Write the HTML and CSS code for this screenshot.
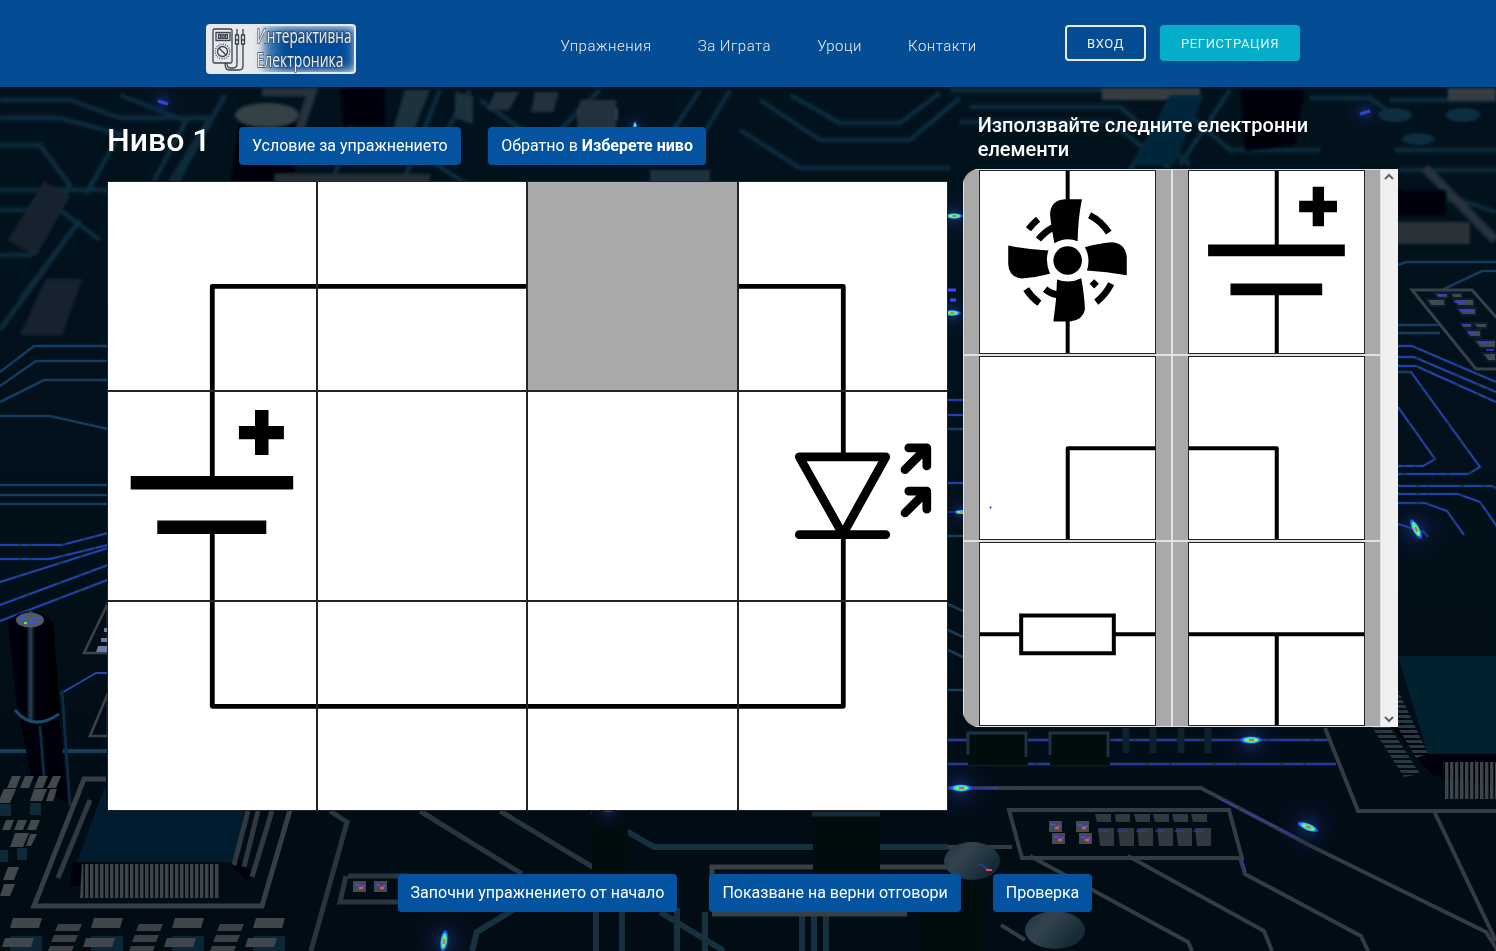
FILE: index.html
```html
<!DOCTYPE html>
<html lang="bg">
<head>
<meta charset="utf-8">
<title>Интерактивна Електроника</title>
<link rel="stylesheet" href="styles.css">
</head>
<body>
<svg class="backdrop" viewBox="0 0 1496 951" preserveAspectRatio="none" aria-hidden="true">
  <defs>
    <linearGradient id="base" x1="0" y1="0" x2="0" y2="1"><stop offset="0" stop-color="#02131e"/><stop offset=".5" stop-color="#01101a"/><stop offset="1" stop-color="#010c14"/></linearGradient>
    <linearGradient id="metal" x1="0" y1="0" x2="1" y2=".6"><stop offset="0" stop-color="#1c3340"/><stop offset=".4" stop-color="#33434d"/><stop offset="1" stop-color="#122733"/></linearGradient>
    <linearGradient id="can"><stop offset="0" stop-color="#000509"/><stop offset=".36" stop-color="#000509"/><stop offset=".43" stop-color="#27435c"/><stop offset=".52" stop-color="#000408"/><stop offset="1" stop-color="#000205"/></linearGradient>
    <radialGradient id="halo"><stop offset="0" stop-color="#1c4c9c" stop-opacity=".5"/><stop offset=".5" stop-color="#151d58" stop-opacity=".2"/><stop offset="1" stop-color="#101850" stop-opacity="0"/></radialGradient>
    <pattern id="pins" width="5" height="34" patternUnits="userSpaceOnUse"><rect width="3.4" height="34" fill="#3d4449"/></pattern>
    <pattern id="pinsH" width="34" height="5" patternUnits="userSpaceOnUse"><rect width="34" height="3" fill="#2a3942"/></pattern>
    <filter id="soft"><feGaussianBlur stdDeviation="1.6"/></filter>
    <filter id="fine"><feGaussianBlur stdDeviation=".6"/></filter>
    <g id="spark"><circle r="34" fill="url(#halo)"/><ellipse rx="11" ry="3.4" fill="#2b50ff"/><ellipse rx="8" ry="3" fill="#2ce8c8"/><path d="M-5-1h4v2h-4zM2-1h4v2H2z" fill="#7cff3c"/><path d="M-2-1h5v2h-5z" fill="#ff5148"/></g>
    <g id="smd"><path d="M0 18h32v30H0z" fill="#0c2836"/><path d="M3 0h29l-3 10H0z" fill="#41474c"/><path d="M-5 20h29l-3 9h-29z" fill="#41474c"/></g>
    <g id="steps"><path d="M4 0h24l-3 7H1zM0 11h24l-3 7h-24zM-4 22h24l-3 7h-24z" fill="#3a4146"/></g>
    <g id="ledblock"><rect width="13" height="11" fill="#454c52"/><path d="M2 4h4M8 5h4" stroke="#3d48ff" stroke-width="2"/><path d="M6 7h4" stroke="#f0504b" stroke-width="2.5"/></g>
  </defs>
  <rect width="1496" height="951" fill="url(#base)"/>
  <g filter="url(#soft)" fill="none" stroke="#07293b" stroke-width="5">
    <path d="M0 100h70l50 18h90l-40 64M0 118h60l60 16-34 60M120 95l66 26-32 60M225 95l-50 90M330 190l30-90M440 90l-36 90M470 90l-40 70 60 40M480 100l70 50 60 10M600 90l-60 60M700 90l-40 60M730 90l-36 60M760 100l60 40h90l50-42M740 130l60 38h150M790 95l50 28h60l40-30M950 90h210l70 60h90M970 107h150l70 58M960 122h150l60 46M1180 90l-50 80M1230 90l-50 75M1310 98h60l30 22M1390 100h106M1395 150h101M1400 170h96M0 190h108M0 210h60l40 30M1400 200h60l36 12"/>
    <path d="M0 145h40l30 40-40 70H0M20 300l60-80M0 330l80-110" stroke="#0a2a3a"/>
    <path d="M262 92h50l-20 60M1425 168l70 72" stroke="#26333c" stroke-width="9"/>
    <path d="M1448 94h48M1102 94h98M578 114h40" stroke="#353c42" stroke-width="12"/>
  </g>
  <g filter="url(#soft)">
    <path d="M1170 95l34 0-30 70h-40z" fill="#05263a"/>
    <path d="M1240 90h65l-10 55-50 6zM240 118h55v65h-65zM340 88h45v38h-42z" fill="#00060a"/>
    <ellipse cx="267" cy="115" rx="32" ry="12" fill="#363f46"/>
    <path d="M275 174h155v10H275z" fill="#202d36"/>
    <path d="M495 92l24 0-10 18h-22zM535 92h24l-6 20h-22zM580 100h36v36h-40z" fill="#20323e"/>
    <path d="M455 92l18 4v28l-18-6zM650 170h60v14h-60zM405 90h25l-20 50h-20z" fill="#1e303c"/>
    <path d="M8 240l36-58 26 14-34 60zM20 335h42l20-56H46z" fill="#15242d"/>
    <path d="M1396 222h74v22h-74z" fill="#293239"/><path d="M1396 190h50v26h-50z" fill="#000609"/>
    <ellipse cx="1395" cy="115" rx="17" ry="7" fill="#0c2d40"/><ellipse cx="1463" cy="115" rx="17" ry="7" fill="#0c2d40"/><ellipse cx="1418" cy="139" rx="16" ry="6" fill="#0c2d40"/>
  </g>
  <g fill="none" filter="url(#fine)">
    <g stroke="#123a5b" stroke-width="2.6">
      <path d="M0 372l34-26h74M0 386l36-25h72M0 402l44-22h64M0 416h50l58 13M0 485h108M0 495h108M0 504h108M0 545h62l46-12M0 559h50l58-14M0 582l108-34M0 605l108-40M0 621l110-42"/>
      <path d="M948 400h15M948 415h15M948 429h15M948 483h15M948 536h15M948 604l15 7M948 630l15 7M948 650l15 7M948 690h15"/>
      <path d="M1398 265l8-3h90M1444 289l38-18h14M1398 325h42M1398 333h42M1398 346h14l84 36M1398 357h16l82 35M1398 366h18l80 36M1398 372h13l69 95-12 7h-70M1398 407l37 52-12 7h-25M1398 486h94l4 2M1398 494h60l22 8 32 46M1398 503h27l22 8 17 24M1398 524l26 8 4 5"/>
    </g>
    <g stroke="#303eff" stroke-width="1" stroke-dasharray="18 3 8 2 30 5">
      <path d="M0 545h62l46-12M0 559h50l58-14M0 582l108-34M0 605l108-40M0 621l110-42M948 400h15M948 415h15M948 483h15M948 512h15M1398 346h14l84 36M1398 357h16l82 35M1398 366h18l80 36M1411 372l69 95-12 7h-70M1398 407l37 52-12 7h-25M1398 486h94M1398 494h60l22 8 32 46M1398 503h27l22 8 17 24M1398 524l26 8 4 5"/>
    </g>
    <path d="M1412 290h60l70 79h-66z" stroke="#344049" stroke-width="3"/>
    <g fill="#41484e" stroke="#071d29" stroke-width="2"><path d="M1434 293h14v5h-10zM1450 293h12v5h-9zM1426 299h19v7h-14zM1452 299h22v7h-16zM1456 308h20v7h-14zM1460 323h12v5h-9zM1473 323h14v5h-10zM1465 330h16v7h-11zM1474 340h22v8h-16zM1482 353h14v8h-8z"/></g>
    <g stroke="#303aff" stroke-width="1.5"><path d="M1437 295h8M1454 302h12M1460 311h14M1462 325h8M1468 333h8M1480 343h10M1486 350h8"/></g>
  </g>
  <g filter="url(#fine)">
    <path d="M108 603l-24 50h24zM108 693l-18 43h18z" fill="none" stroke="#3a4048" stroke-width="2.6"/>
    <path d="M104 628h6v4h-6zM101 638h8v4h-8zM98 646h10v6H96z" fill="#6c79a8"/>
    <path d="M60 694l36-21h12" fill="none" stroke="#2346a5" stroke-width="2"/>
    <path d="M0 751h108" stroke="#183c54" stroke-width="4"/>
    <path d="M20 720l12 60 36 24-10-100z" fill="#00060b"/>
    <path d="M40 726l4 50M62 690l8 116" stroke="#082b40" stroke-width="3"/>
    <path d="M8 622q22-22 45 0l7 90q-20 18-42 4z" fill="url(#can)"/>
    <ellipse cx="30" cy="620" rx="14" ry="7.5" fill="#505b65"/><path d="M20 619h6m3 3h7m-2-4h5" stroke="#424eff" stroke-width="2"/><path d="M24 623h3" stroke="#40e990" stroke-width="2"/>
    <path d="M15 710q18 22 44 4" fill="none" stroke="#1d4867" stroke-width="3"/>
    <path d="M106 779H84L34 906h228l28-96" fill="none" stroke="#363e44" stroke-width="5"/>
    <path d="M105 786l-28 76h156l12-52H108z" fill="#011d2d"/>
    <path d="M77 862l-2 24M233 862l18 16" stroke="#000408" stroke-width="9"/>
    <path d="M82 864h138v34H80z" fill="url(#pins)"/>
    <path d="M90 800l-32 78M248 811l-14 54M258 811l-14 56M272 811l-20 66" stroke="#30393f" stroke-width="5"/>
    <path d="M330 811l17 11-36 129M348 876h60M346 876l-6 26h70M420 811l102 63M500 811l104 63" fill="none" stroke="#263641" stroke-width="5"/>
    <use href="#ledblock" x="353" y="881"/><use href="#ledblock" x="374" y="881"/>
    <path d="M592 811l62 36h294M513 910l-36 22-5 19M660 912l64 39M596 912v39M622 912v39M677 908v43M705 912v39M802 912v39M814 912v39M826 912v39" fill="none" stroke="#18303f" stroke-width="6"/>
    <path d="M712 905v-38h236M712 914h195" fill="none" stroke="#383f45" stroke-width="5"/>
    <path d="M813 811h67v100h-67zM592 811h36v63h-36z" fill="#000910"/><path d="M812 814h68" stroke="#122c38" stroke-width="5"/>
    <use href="#smd" x="10" y="918"/><use href="#smd" x="91" y="918"/><use href="#smd" x="172" y="918"/><use href="#smd" x="253" y="918"/>
    <use href="#steps" x="54" y="924"/><use href="#steps" x="135" y="924"/><use href="#steps" x="216" y="924"/>
    <g fill="#42484d"><path d="M12 776h9l-5 12H7zM25 776h9l-5 12h-9zM39 776h9l-5 12h-9zM53 776h8l-5 12h-9zM4 789h12l-6 14H0v-5zM34 789h13l-5 12H30zM50 789h7l-4 12h-7zM6 820h8l-4 10H2zM18 820h9l-4 10h-9zM31 820h9l-4 10h-9zM15 833h14l-6 14H10zM30 834h7l-6 12h-5zM8 867h11l-5 13H3zM4 884h11l-5 12H0z"/></g>
    <path d="M0 804h11v12H0zM30 803h11v12H30zM0 850h8v12H0zM17 848h10v12H17z" fill="#0d2b3a"/>
    <g fill="none" stroke="#343b42" stroke-width="4">
      <path d="M948 788h253l110 58 175 86 12 19M1009 810h220l13 48h-220zM1240 858l5 16 116 62 7 15M1030 856l158 86 4 9M1128 856l136 75 8 20M1001 925l24 15M948 847h64M1434 811l62 130M1325 728l33 83h138"/>
    </g>
    <path d="M948 740h380M948 764h388" stroke="#1b354d" stroke-width="3"/><path d="M948 740h20m60 0h20m65 0h214M948 764h388M948 788h50M1220 799l40 20 40 20M1242 860l4 12" fill="none" stroke="#333eff" stroke-width="1" stroke-dasharray="20 3 40 4"/>
    <path d="M968 735h60v30h-60zM1050 735h60v30h-60z" fill="#00070e"/><path d="M968 755v-22h58v24M1050 755v-22h58v24" fill="none" stroke="#20323e" stroke-width="3"/>
    <path d="M1126 728v25M1153 728v25M1181 728v25M1208 728v25" stroke="#08202d" stroke-width="7"/>
    <path d="M1398 656h98v98h-68z" fill="#01212f"/><path d="M1392 727l40 48 64 12v-33h-68l-30-40z" fill="#000307"/>
    <path d="M1443 762h53v37h-51z" fill="url(#pins)"/><path d="M1372 727h18l30 47-16 3zM1398 690l30 64-12 4-18-30z" fill="url(#pinsH)"/>
    <use href="#ledblock" x="1049" y="821"/><use href="#ledblock" x="1076" y="821"/><use href="#ledblock" x="1052" y="833"/><use href="#ledblock" x="1079" y="833"/>
    <g fill="#303940"><path d="M1095 814h16v8h-14zM1115 814h15v8h-14zM1134 814h16v8h-14zM1153 814h16v8h-14zM1172 814h16v8h-14zM1191 814h16v8h-14zM1098 828h16v18h-14zM1118 828h16v18h-14zM1137 828h16v18h-14zM1157 828h16v18h-14zM1176 828h16v18h-14zM1195 828h16v18h-14z"/></g>
    <path d="M1098 831h112" stroke="#3440b0" stroke-dasharray="10 9"/>
    <path d="M960 884h20v67h-60v-46z" fill="#000810"/>
    <ellipse cx="972" cy="861" rx="28" ry="19" fill="url(#metal)"/><ellipse cx="1055" cy="930" rx="30" ry="19" fill="url(#metal)"/>
    <path d="M986 870h6" stroke="#f04b48" stroke-width="2"/><path d="M980 864l8 5" stroke="#353eff"/>
  </g>
  <g><use href="#spark" x="1251" y="740"/><use href="#spark" x="961" y="788"/><use href="#spark" transform="translate(1308 827) rotate(22)"/><use href="#spark" transform="translate(1416 529) rotate(62)"/><use href="#spark" transform="translate(444 941) rotate(98)"/><use href="#spark" transform="translate(954 216) scale(.8)"/><use href="#spark" transform="translate(952 313) scale(.8)"/><use href="#spark" transform="translate(961 512) scale(.6)"/><use href="#spark" transform="translate(635 127) rotate(90) scale(.5)"/><use href="#spark" transform="translate(608 809) scale(.7)"/></g>
  <path d="M158 101l10 3M1360 114l10-3M948 290h8M950 300h6" stroke="#3c48ff" stroke-width="3"/>
  <circle cx="163" cy="102" r="20" fill="url(#halo)"/><circle cx="1365" cy="112" r="20" fill="url(#halo)"/>
</svg>

<svg class="symbols" aria-hidden="true">
  <symbol id="horizontal" viewBox="1 1 208 208" preserveAspectRatio="none"><path class="wire" d="M0 105.3h210"/></symbol>
  <symbol id="down-right" viewBox="1 1 208 208" preserveAspectRatio="none"><path class="wire" d="M105.3 210V105.3H210"/></symbol>
  <symbol id="down-left" viewBox="1 1 208 208" preserveAspectRatio="none"><path class="wire" d="M105.3 210V105.3H0"/></symbol>
  <symbol id="up-right" viewBox="1 1 208 208" preserveAspectRatio="none"><path class="wire" d="M105.3 0v105.3H210"/></symbol>
  <symbol id="up-left" viewBox="1 1 208 208" preserveAspectRatio="none"><path class="wire" d="M105.3 0v105.3H0"/></symbol>
  <symbol id="tee" viewBox="1 1 208 208" preserveAspectRatio="none"><path class="wire" d="M0 105.3h210M105.3 105.3V210"/></symbol>
  <symbol id="battery" viewBox="1 1 208 208" preserveAspectRatio="none"><path class="wire" d="M105.3 0v90M105.3 136v74"/><path d="M23.7 85h162.5v13.5H23.700zM50.3 129.5h109V143h-109zM131.900 35h45v13.2h-45zM148 19h13.5v45H148z"/></symbol>
  <symbol id="led" viewBox="1 1 208 208" preserveAspectRatio="none"><path class="wire" d="M105.3 0v66M105.3 144v66"/><path class="thick" d="M61.3 65.800h86.500l-43 77.500zM61.3 143.700h86.500M170.800 56.900h18v18M167 78.700l21.800-21.800M170.800 100.200h18v18M167 122l21.800-21.800"/></symbol>
  <symbol id="fan" viewBox="89 212 527 547" preserveAspectRatio="none">
    <path d="M347 212h12v90h-12zM347 655h12v105h-12z"/>
    <circle cx="353" cy="481" r="43"/>
    <path d="M396 297H345Q300 300 300 345Q304 385 313 429Q348 408 383 423Q384 355 396 297zM405 441Q440 430 487 426Q527 430 531 470V525Q470 514 411 511Q423 475 405 441zM321 538Q358 552 394 534Q404 590 405 628Q399 660 360 664H310Q320 600 321 538zM174 436Q230 448 295 451Q284 485 300 521Q260 532 215 535Q176 531 174 492z"/>
    <path class="blur-line" d="M419 345Q452 361 477 397M235 387Q248 370 264 357M265 418Q282 396 310 381M228 567Q244 592 268 609M285 567Q300 580 325 585M484 551Q468 583 439 606"/>
    <path d="M433 537l14 14-14 14-14-14z"/>
  </symbol>
  <symbol id="resistor" viewBox="89 188 527 548" preserveAspectRatio="none"><path class="resistor-line" d="M80 463h133M492 463h130M213 406h279v114H213z"/></symbol>
</svg>

<header class="header">
  <a class="logo">
    <svg width="150" height="50" viewBox="0 0 150 50">
      <defs><filter id="logo-soft" x="-30%" y="-30%" width="160%" height="160%"><feGaussianBlur stdDeviation="5"/></filter><clipPath id="logo-clip"><rect x="2" y="2" width="146" height="46" rx="2"/></clipPath></defs>
      <rect width="150" height="50" rx="4" fill="#e7e9ec"/>
      <g clip-path="url(#logo-clip)"><rect x="58" y="4" width="92" height="43" fill="#064b99" opacity=".75" filter="url(#logo-soft)"/><rect x="72" y="8" width="72" height="36" fill="#064b99" filter="url(#logo-soft)"/></g>
      <g fill="none" stroke="#39424c" stroke-width="1.3"><rect x="7" y="5" width="19" height="34" rx="1.5"/><rect x="10" y="8.500" width="14" height="8"/><circle cx="16.500" cy="27.500" r="5"/><circle cx="16.500" cy="27.500" r="7.300" stroke-dasharray="1 1.300"/><path d="M13 24l7 7M12.500 10.500h2v4h-2zM16 10.500h2v4h-2zM19.500 10.500h2v4h-2zM31 5v6M37 5v6M29.500 11h3v9h-3zM35.500 11h3v9h-3zM29.500 16h3M35.500 16h3M31 20v20q0 4-4 4h-3q-3 0-3-5M37 20v22q0 4-4 4H23q-4 0-4-7"/></g>
      <g class="logo-text"><text x="50.500" y="19" textLength="95" lengthAdjust="spacingAndGlyphs">Интерактивна</text><text x="50.500" y="43.300" textLength="87" lengthAdjust="spacingAndGlyphs">Електроника</text></g>
    </svg>
  </a>
  <nav class="nav"><a>Упражнения</a><a>За Играта</a><a>Уроци</a><a>Контакти</a></nav>
  <div class="account"><a class="login">ВХОД</a><a class="register">РЕГИСТРАЦИЯ</a></div>
</header>

<main class="game">
  <section class="exercise">
    <div class="toolbar"><h1>Ниво 1</h1><button class="button">Условие за упражнението</button><button class="button">Обратно в <b>Изберете ниво</b></button></div>
    <div class="board">
      <div class="cell"><svg><use href="#down-right"/></svg></div>
      <div class="cell"><svg><use href="#horizontal"/></svg></div>
      <div class="cell slot"></div>
      <div class="cell"><svg><use href="#down-left"/></svg></div>
      <div class="cell"><svg><use href="#battery"/></svg></div>
      <div class="cell"></div>
      <div class="cell"></div>
      <div class="cell"><svg><use href="#led"/></svg></div>
      <div class="cell"><svg><use href="#up-right"/></svg></div>
      <div class="cell"><svg><use href="#horizontal"/></svg></div>
      <div class="cell"><svg><use href="#horizontal"/></svg></div>
      <div class="cell"><svg><use href="#up-left"/></svg></div>
    </div>
  </section>
  <aside class="parts">
    <h2>Използвайте следните електронни елементи</h2>
    <div class="palette">
      <div class="palette-grid">
        <div class="part"><svg><use href="#fan"/></svg></div>
        <div class="part"><svg><use href="#battery"/></svg></div>
        <div class="part"><svg><use href="#down-right"/><circle cx="10.500" cy="150.500" r="1" fill="#2020f0"/></svg></div>
        <div class="part"><svg><use href="#down-left"/></svg></div>
        <div class="part"><svg><use href="#resistor"/></svg></div>
        <div class="part"><svg><use href="#tee"/></svg></div>
      </div>
      <div class="scrollbar"><svg width="10" height="8" viewBox="0 0 10 8"><path d="M1 6l4-4 4 4"/></svg><svg width="10" height="8" viewBox="0 0 10 8"><path d="M1 2l4 4 4-4"/></svg></div>
    </div>
  </aside>
</main>
<footer class="actions"><button class="button">Започни упражнението от начало</button><button class="button">Показване на верни отговори</button><button class="button">Проверка</button></footer>
</body>
</html>
```

FILE: styles.css
```css
* { box-sizing: border-box; }
body { margin: 0; height: 951px; overflow: hidden; background: #010f19; color: #fff; font-family: Roboto, sans-serif; font-size: 16px; line-height: 24px; }
.backdrop { position: fixed; inset: 0; width: 100%; height: 100%; z-index: -1; }
.symbols { display: none; }
.header { height: 87px; padding-left: 206px; display: flex; align-items: flex-start; background: rgba(4, 80, 153, .96); }
.logo { width: 150px; height: 50px; margin-top: 24px; }
.logo svg { display: block; overflow: visible; }
.logo-text { font-family: "Open Sans", sans-serif; font-size: 20.500px; fill: #e9edf2; stroke: #30465f; stroke-width: 1.500px; paint-order: stroke; }
.nav { width: 504.500px; margin: 34px 0 0 204.500px; display: flex; gap: 46px; font-size: 15px; font-weight: 300; letter-spacing: .5px; color: #eceff3; white-space: nowrap; }
.account { margin-top: 25px; display: flex; gap: 14px; font-size: 13px; font-weight: 400; letter-spacing: .65px; color: #edf1f5; }
.login, .register { height: 36px; padding-top: 1px; border-radius: 4px; display: flex; align-items: center; justify-content: center; }
.login { width: 81px; border: 2px solid #e8ebee; }
.register { width: 140px; background: #04aec9; }
.game { height: 724px; padding-left: 107px; display: flex; }
.exercise { width: 841px; }
.toolbar { height: 94px; padding-top: 34px; display: flex; align-items: flex-start; }
h1 { width: 132px; margin: 0; font-size: 32px; line-height: 38px; font-weight: 500; }
.button { height: 38px; margin: 0; padding: 0 13px; border: 0; border-radius: 4px; background: #0453a1; color: #fff; font: 16px/24px Roboto, sans-serif; white-space: nowrap; }
.toolbar .button { margin-top: 6px; }
.toolbar .button + .button { margin-left: 27.600px; }
.button b { font-weight: 700; }
.board { height: 630px; display: grid; grid-template-columns: 210px 210px 211px 210px; grid-template-rows: repeat(3, 210px); }
.cell, .part svg { border: 1px solid #212529; background: #fff; }
.cell { min-width: 0; }
.cell svg { display: block; width: 100%; height: 100%; }
.slot { background: #a9a9a9; }
.wire { fill: none; stroke: #000; stroke-width: 4.800px; stroke-linejoin: round; }
.thick { fill: none; stroke: #000; stroke-width: 8.700px; stroke-linecap: round; stroke-linejoin: round; }
.blur-line { fill: none; stroke: #000; stroke-width: 20px; }
.resistor-line { fill: none; stroke: #000; stroke-width: 12px; }
.parts { width: 435px; margin-left: 15px; padding-top: 26px; }
h2 { width: 370px; height: 56px; margin: 0 0 0 14.700px; font-size: 20px; line-height: 24px; font-weight: 500; }
.palette { height: 558px; display: flex; overflow: hidden; border-radius: 16px 0 0 16px; background: #a9a9a9; }
.palette-grid { width: 418px; display: grid; grid-template-columns: 209px 209px; grid-template-rows: repeat(3, 186px); }
.part { padding: 0 15px; border: 1px solid #dee2e6; }
.part svg { display: block; width: 177px; height: 184px; }
.scrollbar { width: 17px; padding: 4px 1px 4px 0; display: flex; flex-direction: column; justify-content: space-between; align-items: center; background: #f0f0f0; }
.scrollbar path { fill: none; stroke: #606060; stroke-width: 2px; }
.actions { padding: 63px 0 0 397.600px; display: flex; gap: 32px; }
```
